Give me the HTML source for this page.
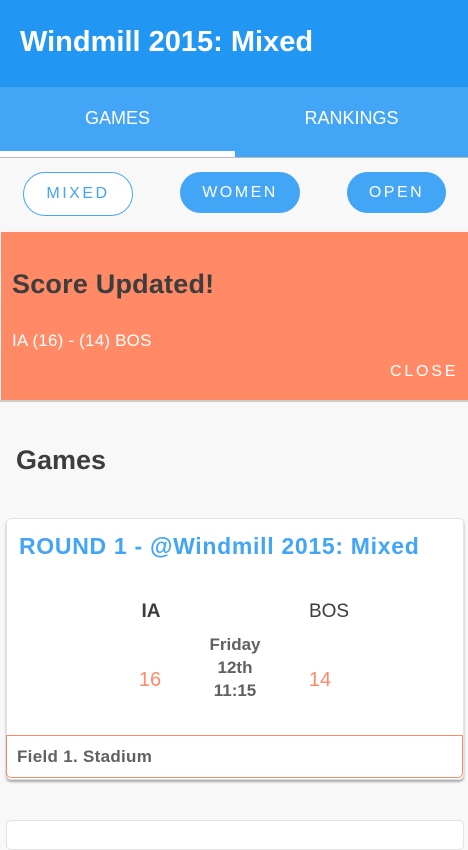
<!DOCTYPE html>
<html><head><style>
*{margin:0;padding:0;box-sizing:border-box}
body{width:468px;height:833px;overflow:hidden;background:#f8f8f8;font-family:"Liberation Sans",Arial,sans-serif;position:relative}
.abs{position:absolute}
</style></head><body>
<div class="abs" style="left:0;top:0;width:468px;height:87px;background:#2196f3"></div>
<div class="abs" style="left:20px;top:26px;color:#fff;font-weight:bold;font-size:29px;letter-spacing:0px">Windmill 2015: Mixed</div>
<div class="abs" style="left:0;top:87px;width:468px;height:70px;background:#42a5f5"></div>
<div class="abs" style="left:0;top:108px;width:235px;text-align:center;color:#fff;font-size:18px">GAMES</div>
<div class="abs" style="left:235px;top:108px;width:233px;text-align:center;color:#fff;font-size:18px">RANKINGS</div>
<div class="abs" style="left:0;top:151px;width:235px;height:6px;background:#fff"></div>
<div class="abs" style="left:0;top:157px;width:468px;height:1px;background:#bbb"></div>
<div class="abs" style="left:23px;top:172px;width:110px;height:44px;border:1px solid #42a5f5;border-radius:22px;background:#fff;color:#42a5f5;font-size:16px;letter-spacing:2.5px;text-align:center;line-height:42px">MIXED</div>
<div class="abs" style="left:180px;top:172px;width:120px;height:41px;border-radius:21px;background:#42a5f5;color:#fff;font-size:16px;letter-spacing:2.5px;text-align:center;line-height:41px">WOMEN</div>
<div class="abs" style="left:347px;top:172px;width:99px;height:41px;border-radius:21px;background:#42a5f5;color:#fff;font-size:16px;letter-spacing:2.5px;text-align:center;line-height:41px">OPEN</div>
<div class="abs" style="left:1px;top:232px;width:467px;height:168px;background:#ff8a65"></div>
<div class="abs" style="left:0;top:400px;width:468px;height:2px;background:#ccc"></div>
<div class="abs" style="left:12px;top:269px;color:#3d3d3d;font-weight:bold;font-size:27px;letter-spacing:0.2px">Score Updated!</div>
<div class="abs" style="left:12px;top:331px;color:#fff;font-size:17px;letter-spacing:0.2px">IA (16) - (14) BOS</div>
<div class="abs" style="left:390px;top:363px;color:#fff;font-size:16px;letter-spacing:2.8px">CLOSE</div>
<div class="abs" style="left:16px;top:445px;color:#3d3d3d;font-weight:bold;font-size:27px">Games</div>
<div class="abs" style="left:6px;top:518px;width:458px;height:262px;background:#fff;border:1px solid #e2e2e2;border-radius:5px;box-shadow:0 2px 2px #aaa"></div>
<div class="abs" style="left:19px;top:533px;color:#42a5f5;font-weight:bold;font-size:23px;letter-spacing:0.7px">ROUND 1 - @Windmill 2015: Mixed</div>
<div class="abs" style="left:130px;top:601px;width:42px;text-align:center;color:#3d3d3d;font-weight:bold;font-size:19px">IA</div>
<div class="abs" style="left:300px;top:601px;width:58px;text-align:center;color:#3d3d3d;font-size:19px">BOS</div>
<div class="abs" style="left:130px;top:669px;width:40px;text-align:center;color:#ff8a65;font-size:20px">16</div>
<div class="abs" style="left:300px;top:669px;width:40px;text-align:center;color:#ff8a65;font-size:20px">14</div>
<div class="abs" style="left:195px;top:633px;width:80px;text-align:center;color:#616161;font-weight:bold;font-size:17px;line-height:23px">Friday<br>12th<br>11:15</div>
<div class="abs" style="left:6px;top:735px;width:457px;height:43px;border:1px solid #ff8a65;border-radius:0 0 5px 5px;background:#fff"></div>
<div class="abs" style="left:17px;top:747px;color:#616161;font-weight:bold;font-size:17px;letter-spacing:0.3px">Field 1. Stadium</div>
<div class="abs" style="left:6px;top:820px;width:458px;height:30px;background:#fff;border:1px solid #e2e2e2;border-radius:5px"></div>
</body></html>
